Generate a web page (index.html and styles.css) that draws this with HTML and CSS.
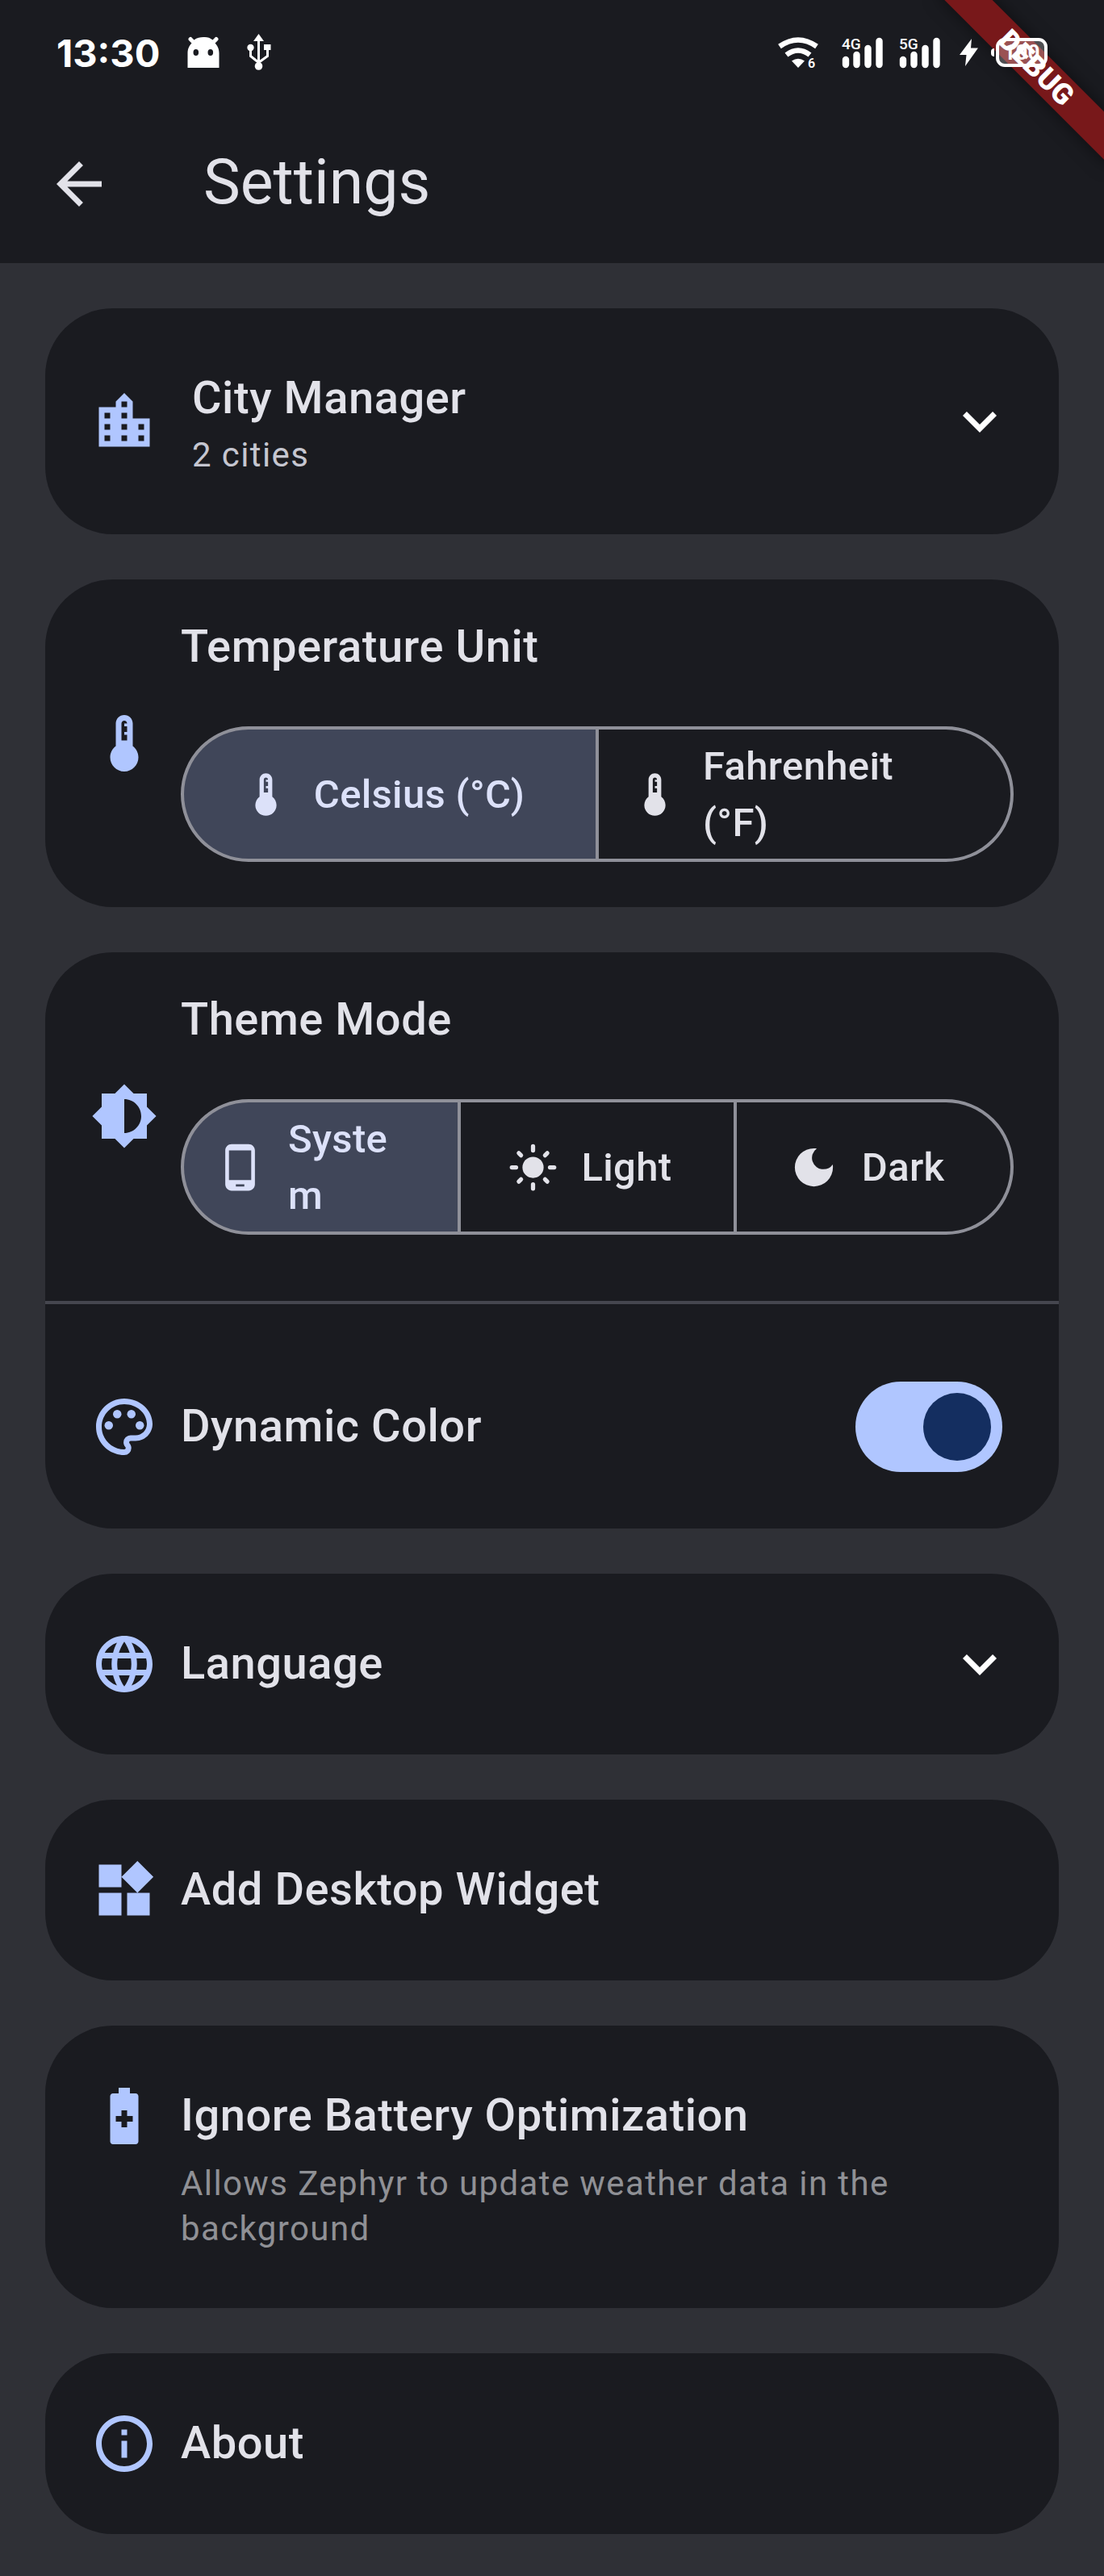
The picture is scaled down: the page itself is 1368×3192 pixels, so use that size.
FILE: index.html
```html
<!DOCTYPE html>
<html lang="en">
<head>
<meta charset="utf-8">
<meta name="viewport" content="width=device-width, initial-scale=1">
<title>Settings</title>
<link rel="stylesheet" href="styles.css">
</head>
<body>
<svg class="sprite" aria-hidden="true">
  <symbol id="thermostat" viewBox="0 0 24 24"><path d="M15 13V5c0-1.66-1.34-3-3-3S9 3.34 9 5v8c-1.21.91-2 2.37-2 4 0 2.76 2.24 5 5 5s5-2.24 5-5c0-1.63-.79-3.09-2-4zm-4-2V5c0-.55.45-1 1-1s1 .45 1 1h-1v1h1v2h-1v1h1v2h-2z"/></symbol>
  <symbol id="expand" viewBox="0 0 24 24"><path d="M16.59 8.59 12 13.17 7.41 8.59 6 10l6 6 6-6z"/></symbol>
  <symbol id="signal" viewBox="0 0 51 39"><path d="M5 28v6M18.500 22v12M32.500 14v20M46.500 5v29" fill="none" stroke="#fff" stroke-width="8.400" stroke-linecap="round"/></symbol>
</svg>

<header class="top">
  <div class="status">
    <div class="status-group">
      <span class="clock">13:30</span>
      <svg class="android" width="40" height="40" viewBox="0 0 40 40"><path fill-rule="evenodd" d="M.5 39V21C.5 15 3 11 5.500 8.500L2 5A2.300 2.300 0 0 1 6 2L8.500 4.500C12 1.500 16 1 20 1s8 .5 11.500 3.500L34 2a2.300 2.300 0 0 1 4 3L34.500 8.500C37 11 39.500 15 39.500 21v18zM7.500 20a3.300 4 0 1 0 6.600 0 3.300 4 0 1 0-6.600 0M25.500 20a3.300 4 0 1 0 6.600 0 3.300 4 0 1 0-6.600 0"/></svg>
      <svg class="usb" width="30" height="46" viewBox="0 0 30 46"><path d="m14.500 0 6.500 9h-13z"/><circle cx="4.500" cy="17" r="4.200"/><circle cx="14.500" cy="40" r="4.800"/><path d="M21 13h8.500v7H21z"/><path d="M14.500 6v32M4.500 18v9.500l10 8M25.500 18v9.500l-11 8" fill="none" stroke="#fff" stroke-width="3"/></svg>
    </div>
    <div class="status-group status-right">
      <svg class="wifi" width="50" height="51" viewBox="0 -6 50 51"><path d="M2 11.500Q25-4.500 48 11.500" fill="none" stroke="#fff" stroke-width="6.500"/><path d="M10.500 22Q25 11 39.500 22" fill="none" stroke="#fff" stroke-width="6.500"/><path d="M17 29.500q8-5.500 16 0L25 38z"/><text x="37" y="38" font-size="16" font-weight="600">6</text></svg>
      <span class="signal"><svg width="51" height="39"><use href="#signal"/></svg><b>4G</b></span>
      <span class="signal"><svg width="51" height="39"><use href="#signal"/></svg><b>5G</b></span>
      <svg class="bolt" width="24" height="36" viewBox="0 0 24 36"><path d="M16 1 1 21h8.500L8 35 24 12.500h-9z"/></svg>
      <span class="battery"><i></i><b>100</b></span>
    </div>
  </div>
  <div class="toolbar">
    <button class="back" type="button" aria-label="Back"><svg width="84" height="84" viewBox="0 0 24 24"><path d="M20 11H7.830l5.590-5.590L12 4l-8 8 8 8 1.410-1.410L7.830 13H20z"/></svg></button>
    <h1>Settings</h1>
  </div>
</header>
<div class="banner"><span>DEBUG</span></div>

<main>
  <section class="card">
    <button class="row city" type="button" aria-expanded="false">
      <svg class="icon" viewBox="0 0 24 24"><path d="M15 11V5l-3-3-3 3v2H3v14h18V11h-6zm-8 8H5v-2h2v2zm0-4H5v-2h2v2zm0-4H5V9h2v2zm6 8h-2v-2h2v2zm0-4h-2v-2h2v2zm0-4h-2V9h2v2zm0-4h-2V5h2v2zm6 12h-2v-2h2v2zm0-4h-2v-2h2v2z"/></svg>
      <span class="text"><span class="title">City Manager</span><span class="sub">2 cities</span></span>
      <svg class="chevron"><use href="#expand"/></svg>
    </button>
  </section>

  <section class="card">
    <div class="row choice">
      <svg class="icon"><use href="#thermostat"/></svg>
      <fieldset>
        <legend class="title">Temperature Unit</legend>
        <div class="segmented">
          <label><input type="radio" name="unit" checked><svg><use href="#thermostat"/></svg><span>Celsius (°C)</span></label>
          <label><input type="radio" name="unit"><svg><use href="#thermostat"/></svg><span>Fahrenheit (°F)</span></label>
        </div>
      </fieldset>
    </div>
  </section>

  <section class="card">
    <div class="row choice">
      <svg class="icon" viewBox="0 0 24 24"><path d="M20 15.310 23.310 12 20 8.690V4h-4.690L12 .69 8.690 4H4v4.690L.69 12 4 15.310V20h4.690L12 23.310 15.310 20H20v-4.690zM12 18V6c3.310 0 6 2.690 6 6s-2.690 6-6 6z"/></svg>
      <fieldset>
        <legend class="title">Theme Mode</legend>
        <div class="segmented">
          <label><input type="radio" name="theme" checked><svg viewBox="0 0 24 24"><path d="M16 1H8C6.340 1 5 2.340 5 4v16c0 1.660 1.340 3 3 3h8c1.660 0 3-1.340 3-3V4c0-1.660-1.340-3-3-3zm-2 20h-4v-1h4v1zm3.250-3H6.750V4h10.500v14z"/></svg><span>System</span></label>
          <label><input type="radio" name="theme"><svg viewBox="0 0 24 24"><circle cx="12" cy="12" r="5"/><path d="M12 2v2M12 20v2M2 12h2M20 12h2M5.280 5.280l1.060 1.060M17.660 17.660l1.060 1.060M5.280 18.720l1.060-1.060M17.660 6.340l1.060-1.060" fill="none" stroke="currentColor" stroke-width="2" stroke-linecap="round"/></svg><span>Light</span></label>
          <label><input type="radio" name="theme"><svg viewBox="0 0 24 24"><path d="M12 3a9 9 0 1 0 9 9c0-.46-.04-.92-.1-1.360a5.389 5.389 0 0 1-4.400 2.260 5.403 5.403 0 0 1-3.140-9.800c-.44-.06-.9-.1-1.360-.1z"/></svg><span>Dark</span></label>
        </div>
      </fieldset>
    </div>
    <hr>
    <label class="row dynamic">
      <svg class="icon" viewBox="0 0 24 24"><path d="M12 22C6.490 22 2 17.510 2 12S6.490 2 12 2s10 4.040 10 9c0 3.310-2.690 6-6 6h-1.770c-.28 0-.5.22-.5.5 0 .12.05.23.13.33.41.47.64 1.060.64 1.670A2.500 2.500 0 0 1 12 22zm0-18c-4.410 0-8 3.590-8 8s3.590 8 8 8c.28 0 .5-.22.5-.5a.54.54 0 0 0-.14-.35c-.41-.46-.63-1.050-.63-1.650a2.500 2.500 0 0 1 2.500-2.500H16c2.210 0 4-1.790 4-4 0-3.860-3.590-7-8-7z"/><circle cx="6.500" cy="11.500" r="1.500"/><circle cx="9.500" cy="7.500" r="1.500"/><circle cx="14.500" cy="7.500" r="1.500"/><circle cx="17.500" cy="11.500" r="1.500"/></svg>
      <span class="text title">Dynamic Color</span>
      <input class="switch" type="checkbox" role="switch" checked>
    </label>
  </section>

  <section class="card">
    <button class="row" type="button" aria-expanded="false">
      <svg class="icon" viewBox="0 0 24 24"><path d="M11.990 2C6.470 2 2 6.480 2 12s4.470 10 9.990 10C17.520 22 22 17.520 22 12S17.520 2 11.990 2zm6.930 6h-2.950c-.32-1.250-.78-2.450-1.380-3.560 1.840.63 3.370 1.910 4.330 3.560zM12 4.040c.83 1.200 1.480 2.530 1.910 3.960h-3.820c.43-1.430 1.080-2.760 1.910-3.960zM4.260 14C4.100 13.360 4 12.690 4 12s.1-1.360.26-2h3.380c-.08.66-.14 1.320-.14 2s.06 1.340.14 2H4.260zm.82 2h2.950c.32 1.250.78 2.450 1.380 3.560-1.840-.63-3.370-1.900-4.330-3.560zm2.950-8H5.080c.96-1.660 2.490-2.930 4.330-3.560C8.810 5.550 8.350 6.750 8.030 8zM12 19.960c-.83-1.200-1.480-2.530-1.910-3.960h3.820c-.43 1.430-1.080 2.760-1.910 3.960zM14.340 14H9.660c-.09-.66-.16-1.320-.16-2s.07-1.350.16-2h4.680c.09.65.16 1.320.16 2s-.07 1.340-.16 2zm.25 5.560c.6-1.110 1.060-2.310 1.380-3.560h2.950c-.96 1.650-2.490 2.930-4.330 3.560zM16.360 14c.08-.66.14-1.320.14-2s-.06-1.340-.14-2h3.380c.16.64.26 1.310.26 2s-.1 1.360-.26 2h-3.380z"/></svg>
      <span class="text title">Language</span>
      <svg class="chevron"><use href="#expand"/></svg>
    </button>
  </section>

  <section class="card">
    <button class="row" type="button">
      <svg class="icon" viewBox="0 0 24 24"><path d="M13 13v8h8v-8h-8zM3 21h8v-8H3v8zM3 3v8h8V3H3zm13.660-1.310L11 7.340 16.660 13l5.660-5.660-5.660-5.650z"/></svg>
      <span class="text title">Add Desktop Widget</span>
    </button>
  </section>

  <section class="card">
    <button class="row top-aligned" type="button">
      <svg class="icon" viewBox="0 0 24 24"><path d="M16 4h-2V2h-4v2H8c-.55 0-1 .45-1 1v16c0 .55.45 1 1 1h8c.55 0 1-.45 1-1V5c0-.55-.45-1-1-1zm-1 10h-2v2h-2v-2H9v-2h2v-2h2v2h2v2z"/></svg>
      <span class="text"><span class="title">Ignore Battery Optimization</span><span class="sub hint">Allows Zephyr to update weather data in the background</span></span>
    </button>
  </section>

  <section class="card">
    <button class="row" type="button">
      <svg class="icon" viewBox="0 0 24 24"><path d="M11 7h2v2h-2zm0 4h2v6h-2zm1-9C6.480 2 2 6.480 2 12s4.480 10 10 10 10-4.480 10-10S17.520 2 12 2zm0 18c-4.410 0-8-3.590-8-8s3.590-8 8-8 8 3.590 8 8-3.590 8-8 8z"/></svg>
      <span class="text title">About</span>
    </button>
  </section>
</main>
</body>
</html>
```

FILE: styles.css
```css
:root {
  --surface: #1a1b20;
  --page: #2f3036;
  --text: #e2e2e9;
  --muted: #c5c6d0;
  --hint: #8f9095;
  --accent: #b0c6ff;
  --outline: #8f9099;
}

* { box-sizing: border-box; }

body {
  margin: 0;
  min-height: 100vh;
  background: var(--page);
  color: var(--text);
  font-family: Roboto, "Liberation Sans", sans-serif;
}

svg { display: block; flex: none; fill: currentColor; }

button {
  border: 0;
  padding: 0;
  background: none;
  color: inherit;
  font: inherit;
  text-align: left;
}

.sprite { position: absolute; width: 0; height: 0; }

/* Status bar and toolbar */
.top { background: var(--surface); }

.status {
  display: flex;
  justify-content: space-between;
  height: 130px;
  padding: 0 70px;
  color: #fff;
}

.status-group { display: flex; align-items: center; height: 130px; }

.clock {
  padding-top: 2px;
  font: 700 47px/56px Inter, sans-serif;
}

.android { margin-left: 34px; }
.usb { margin-left: 34px; }

.status-right { gap: 20px; }
.wifi { margin-right: 9px; }
.signal { position: relative; }
.signal b {
  position: absolute;
  top: 0;
  left: 0;
  font-size: 19px;
  line-height: 17px;
  font-weight: 500;
}

.bolt { margin-left: 3px; }

.battery {
  position: relative;
  width: 64px;
  height: 36px;
  margin-left: 2px;
  border: 4px solid #fff;
  border-radius: 11px;
  background: rgb(255 255 255 / 25%);
  z-index: 2;
}
.battery i {
  position: absolute;
  left: -10px;
  top: 9px;
  width: 4px;
  height: 10px;
  border-radius: 4px 0 0 4px;
  background: #fff;
}
.battery b {
  display: block;
  font-size: 26px;
  line-height: 28px;
  text-align: center;
}

.toolbar {
  display: flex;
  align-items: center;
  gap: 112px;
  height: 196px;
  padding: 0 56px;
}

h1 {
  margin: 0 0 4px;
  font-size: 77px;
  line-height: 98px;
  font-weight: 400;
}

/* Corner ribbon */
.banner {
  position: absolute;
  top: 0;
  right: 0;
  z-index: 1;
  width: 260px;
  height: 260px;
  overflow: hidden;
  pointer-events: none;
}
.banner span {
  position: absolute;
  top: 63px;
  left: 26px;
  width: 300px;
  transform: rotate(45deg);
  background: #78181a;
  box-shadow: 0 0 21px rgb(0 0 0 / 50%);
  color: #fff;
  font-size: 36px;
  line-height: 42px;
  font-weight: 900;
  text-align: center;
}

/* Cards */
main {
  display: flex;
  flex-direction: column;
  gap: 56px;
  padding: 56px 56px 52px;
}

.card {
  border-radius: 84px;
  background: var(--surface);
  overflow: hidden;
}

.row {
  display: flex;
  align-items: center;
  gap: 28px;
  width: 100%;
  padding: 70px 56px;
}
.row.city { gap: 42px; }
.row.choice { padding: 42px 56px; }
.row.dynamic { padding-right: 70px; }
.row.top-aligned { align-items: flex-start; }

.icon { width: 84px; height: 84px; color: var(--accent); }
.chevron { width: 84px; height: 84px; color: #fff; }

.text { flex: 1; min-width: 0; }

.title {
  display: block;
  padding: 0 0 2px;
  font-size: 56px;
  line-height: 82px;
  font-weight: 500;
  letter-spacing: 0.01em;
}

.sub {
  display: block;
  color: var(--muted);
  font-size: 42px;
  line-height: 56px;
  letter-spacing: 0.033em;
}
.hint { margin-top: 14px; color: var(--hint); }

hr {
  height: 4px;
  margin: 26px 0;
  border: 0;
  background: #45464f;
}

/* Segmented buttons */
fieldset {
  flex: 1;
  min-width: 0;
  margin: 0;
  padding: 0 0 14px;
  border: 0;
}

.segmented {
  display: grid;
  grid-auto-flow: column;
  grid-auto-columns: 1fr;
  gap: 4px;
  height: 168px;
  margin-top: 56px;
  border: 4px solid var(--outline);
  border-radius: 84px;
  background: var(--outline);
  overflow: hidden;
}

.segmented label {
  display: flex;
  align-items: center;
  justify-content: center;
  gap: 28px;
  min-width: 0;
  padding: 0 56px 0 38px;
  background: var(--surface);
  font-size: 49px;
  line-height: 70px;
  font-weight: 500;
  letter-spacing: 0.007em;
}
.segmented label:has(:checked) { background: #404659; color: #dce1f9; }
.segmented span { min-width: 0; padding-top: 2px; overflow-wrap: anywhere; }
.segmented svg { width: 63px; height: 63px; }
.segmented input { position: absolute; opacity: 0; pointer-events: none; }

/* Switch */
.switch {
  appearance: none;
  display: flex;
  justify-content: flex-end;
  flex: none;
  width: 182px;
  height: 112px;
  margin: 0;
  padding: 14px;
  border-radius: 56px;
  background: var(--accent);
}
.switch::before {
  content: "";
  width: 84px;
  height: 84px;
  border-radius: 50%;
  background: #142e60;
}
```
